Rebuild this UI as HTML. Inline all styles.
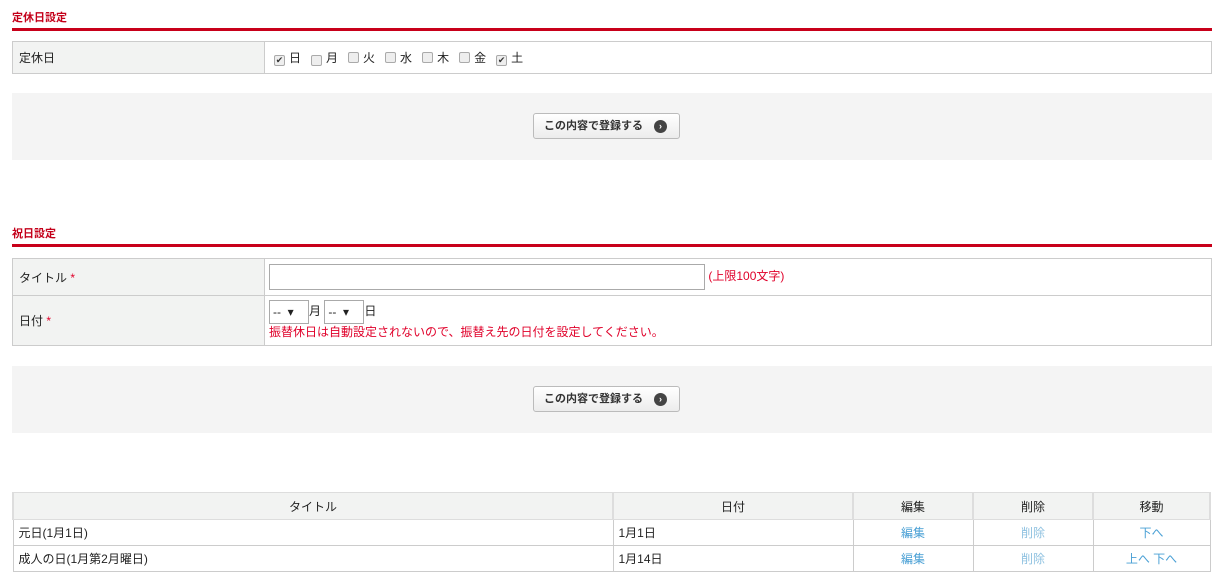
<!DOCTYPE html>
<html><head><meta charset="utf-8"><style>
*{box-sizing:border-box;margin:0;padding:0}
body{width:1228px;height:572px;background:#fff;font-family:"Liberation Sans","Noto Sans CJK JP",sans-serif;font-size:12px;color:#222;position:relative;overflow:hidden}
.a{position:absolute}
.h{color:#c4001a;font-weight:bold;font-size:11px;left:12px}
.line{left:12px;width:1200px;height:3px;background:#c8001a}
table{border-collapse:collapse;position:absolute;left:12px;width:1200px}
td,th{border:1px solid #ccc;font-weight:normal}
.lab{background:#f2f3f2;width:252px;padding-left:6px}
.gray{left:12px;width:1200px;height:67px;background:#f4f4f4}
.btn{left:533px;width:147px;height:26px;border:1px solid #bbb;border-radius:3px;background:linear-gradient(#fff,#ececec);font-size:11px;font-weight:bold;color:#333;line-height:24px;padding-left:10px}
.btn i{position:absolute;right:12px;top:6px;width:13px;height:13px;border-radius:50%;background:#444;color:#fff;font-style:normal;font-size:9px;line-height:13px;text-align:center}
.cb{display:inline-block;width:11px;height:11px;border:1px solid #aaa;border-radius:2px;background:#eee;vertical-align:-1px;margin:0 4px 0 10px;font-size:9px;line-height:9px;text-align:center;color:#333}
.star{color:#e0002a}
.red{color:#e0002a}
.sel{display:inline-block;width:40px;height:24px;border:1px solid #aaa;font-size:12px;line-height:22px;padding-left:3px;vertical-align:middle}
.t th{background:#f2f3f2;height:27px;border:2px solid #ddd;border-width:1px 2px}
.t td{height:26px}
.lk{color:#4aa0d5;text-align:center}
</style></head><body>
<div class="a h" style="top:9px">定休日設定</div>
<div class="a line" style="top:28px"></div>
<table style="top:41px"><tr style="height:32px"><td class="lab">定休日</td><td style="padding-left:0"><span class="cb" style="margin-left:9px">✔</span>日<span class="cb">&nbsp;</span>月<span class="cb"></span>火<span class="cb"></span>水<span class="cb"></span>木<span class="cb"></span>金<span class="cb">✔</span>土</td></tr></table>
<div class="a gray" style="top:93px"></div>
<div class="a btn" style="top:113px">この内容で登録する<i>›</i></div>

<div class="a h" style="top:225px">祝日設定</div>
<div class="a line" style="top:244px"></div>
<table style="top:258px">
<tr style="height:37px"><td class="lab">タイトル <span class="star">*</span></td><td style="padding-left:4px"><span style="display:inline-block;width:436px;height:26px;border:1px solid #aaa;vertical-align:middle"></span> <span class="red">(上限100文字)</span></td></tr>
<tr style="height:50px"><td class="lab">日付 <span class="star">*</span></td><td style="padding-left:4px;line-height:17px"><span class="sel">-- &nbsp;▾</span>月 <span class="sel">-- &nbsp;▾</span>日<br><span class="red">振替休日は自動設定されないので、振替え先の日付を設定してください。</span></td></tr>
</table>
<div class="a gray" style="top:366px"></div>
<div class="a btn" style="top:386px">この内容で登録する<i>›</i></div>

<table class="t" style="top:492px;width:1199px">
<tr><th style="width:600px">タイトル</th><th style="width:240px">日付</th><th style="width:120px">編集</th><th style="width:120px">削除</th><th>移動</th></tr>
<tr><td style="padding-left:5px">元日(1月1日)</td><td style="padding-left:5px">1月1日</td><td class="lk">編集</td><td class="lk" style="color:#8ec1e0">削除</td><td class="lk">下へ</td></tr>
<tr><td style="padding-left:5px">成人の日(1月第2月曜日)</td><td style="padding-left:5px">1月14日</td><td class="lk">編集</td><td class="lk" style="color:#8ec1e0">削除</td><td class="lk">上へ 下へ</td></tr>
</table>
</body></html>
